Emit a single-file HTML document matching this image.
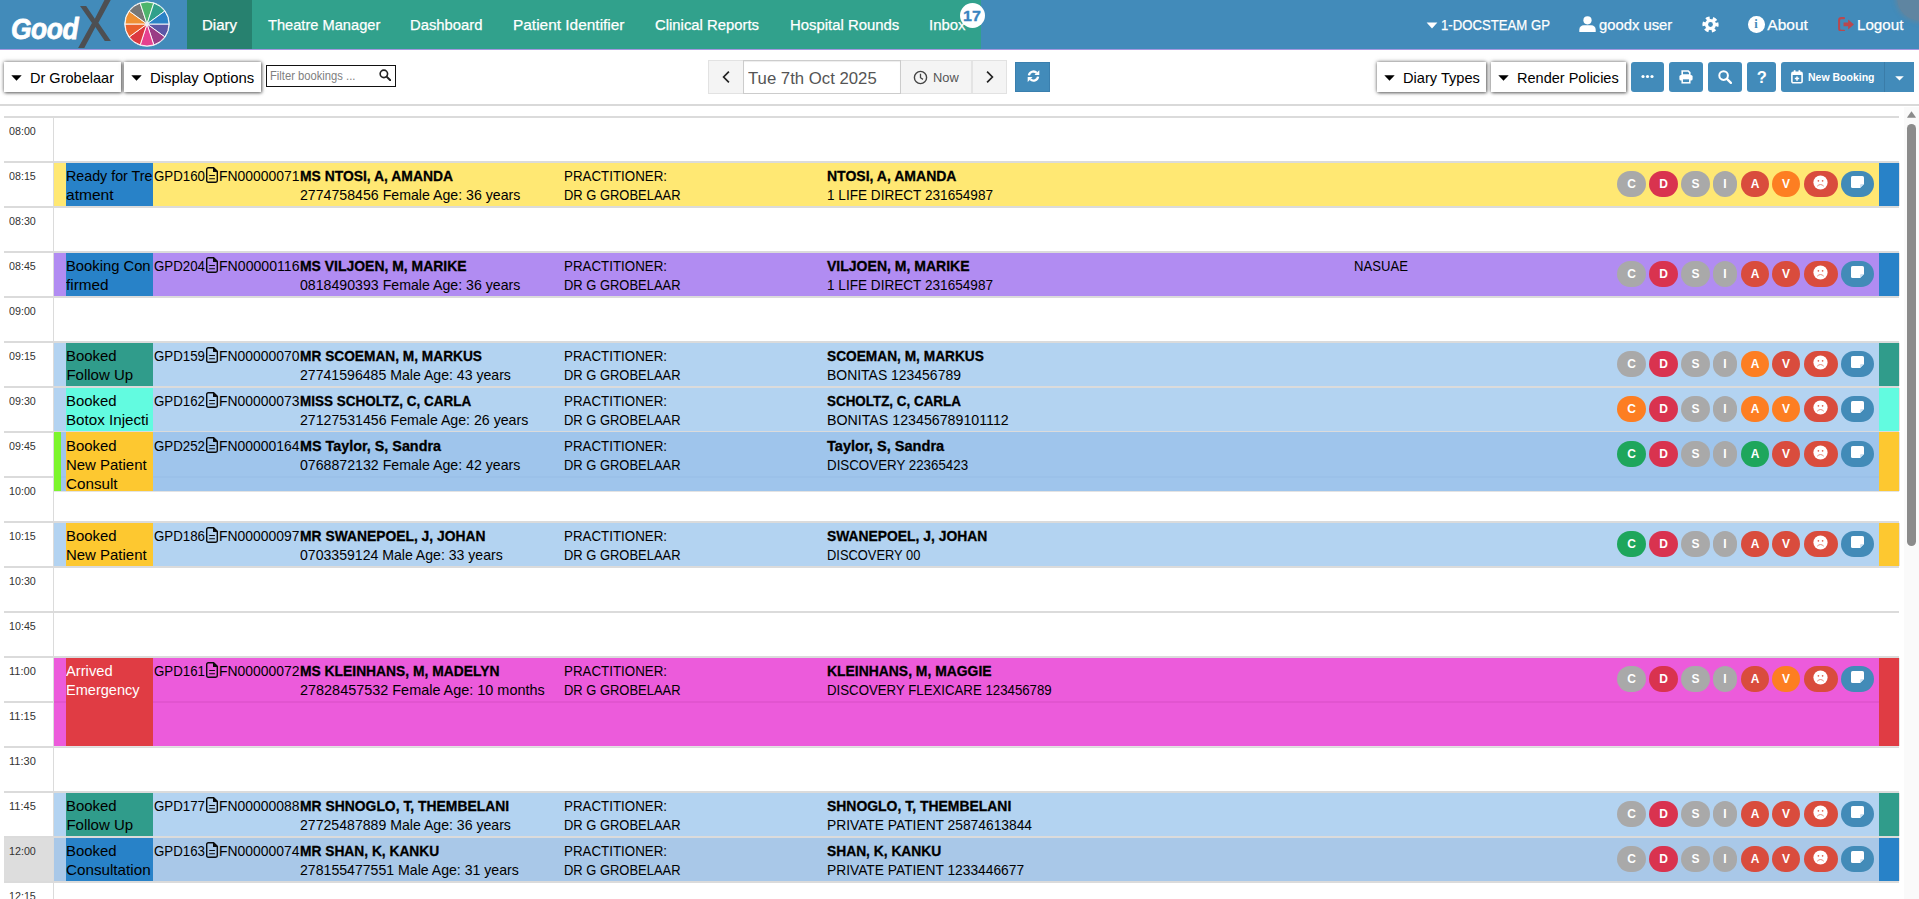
<!DOCTYPE html>
<html lang="en"><head><meta charset="utf-8"><title>GoodX Diary</title>
<style>html,body{margin:0;padding:0}body{width:1919px;height:899px;overflow:hidden;position:relative;background:#fff;font-family:'Liberation Sans',sans-serif;color:#000}
.t{position:absolute;white-space:nowrap;display:block}.b{position:absolute;display:block}</style></head>
<body>
<div class="b" style="left:0px;top:0px;width:1919px;height:49px;background:#428bba;"></div>
<div class="b" style="left:187px;top:0px;width:794px;height:49px;background:#31a18c;"></div>
<div class="b" style="left:187px;top:0px;width:65px;height:49px;background:#27816f;"></div>
<div class="b" style="left:0px;top:49px;width:1919px;height:1px;background:#a397df;"></div>
<div class="b" style="left:1897px;top:-25px;width:48px;height:46px;border-radius:50%;background:rgba(120,130,140,.55);box-shadow:0 0 4px 2px rgba(120,130,140,.45)"></div>
<span class="t" style="left:11px;top:9.5px;font-size:29px;line-height:38px;font-weight:700;font-style:italic;color:#fff;transform-origin:0 50%;transform:scaleX(.91);-webkit-text-stroke:.8px #fff;letter-spacing:-.5px">Good</span>
<span class="t" style="left:75px;top:-12px;font-size:70px;line-height:72px;color:#4d4f52;transform-origin:0 50%;transform:scaleX(.86) skewX(5deg)">X</span>
<div class="b" style="left:66px;top:0px;width:27px;height:6px;background:#428bba;"></div>
<div class="b" style="left:103px;top:41px;width:21px;height:8px;background:#428bba;"></div>
<svg class="b" style="left:124px;top:1px" width="46" height="46" viewBox="-23 -23 46 46"><circle r="22.6" fill="#fff"/><path d="M0 0L22.00 0.00A22 22 0 0 1 17.80 12.93Z" fill="#5b57a6" stroke="#fff" stroke-width=".9"/><path d="M0 0L17.80 12.93A22 22 0 0 1 6.80 20.92Z" fill="#9a3c86" stroke="#fff" stroke-width=".9"/><path d="M0 0L6.80 20.92A22 22 0 0 1 -6.80 20.92Z" fill="#e5408f" stroke="#fff" stroke-width=".9"/><path d="M0 0L-6.80 20.92A22 22 0 0 1 -17.80 12.93Z" fill="#dc3840" stroke="#fff" stroke-width=".9"/><path d="M0 0L-17.80 12.93A22 22 0 0 1 -22.00 0.00Z" fill="#ea612c" stroke="#fff" stroke-width=".9"/><path d="M0 0L-22.00 0.00A22 22 0 0 1 -17.80 -12.93Z" fill="#ef9033" stroke="#fff" stroke-width=".9"/><path d="M0 0L-17.80 -12.93A22 22 0 0 1 -6.80 -20.92Z" fill="#777777" stroke="#fff" stroke-width=".9"/><path d="M0 0L-6.80 -20.92A22 22 0 0 1 6.80 -20.92Z" fill="#4db56c" stroke="#fff" stroke-width=".9"/><path d="M0 0L6.80 -20.92A22 22 0 0 1 17.80 -12.93Z" fill="#30a08b" stroke="#fff" stroke-width=".9"/><path d="M0 0L17.80 -12.93A22 22 0 0 1 22.00 -0.00Z" fill="#2a82c6" stroke="#fff" stroke-width=".9"/><circle r="2" fill="#e8eef5"/></svg>
<span class="t" style="left:202.3px;top:15.43px;font-size:15.5px;line-height:20px;color:#fff;transform-origin:0 0;transform:scaleX(0.9676);-webkit-text-stroke:.25px #fff;">Diary</span>
<span class="t" style="left:267.7px;top:15.43px;font-size:15.5px;line-height:20px;color:#fff;transform-origin:0 0;transform:scaleX(0.9444);-webkit-text-stroke:.25px #fff;">Theatre Manager</span>
<span class="t" style="left:410.0px;top:15.43px;font-size:15.5px;line-height:20px;color:#fff;transform-origin:0 0;transform:scaleX(0.9561);-webkit-text-stroke:.25px #fff;">Dashboard</span>
<span class="t" style="left:513.3px;top:15.43px;font-size:15.5px;line-height:20px;color:#fff;transform-origin:0 0;transform:scaleX(0.9954);-webkit-text-stroke:.25px #fff;">Patient Identifier</span>
<span class="t" style="left:655.0px;top:15.43px;font-size:15.5px;line-height:20px;color:#fff;transform-origin:0 0;transform:scaleX(0.9581);-webkit-text-stroke:.25px #fff;">Clinical Reports</span>
<span class="t" style="left:789.7px;top:15.43px;font-size:15.5px;line-height:20px;color:#fff;transform-origin:0 0;transform:scaleX(0.9610);-webkit-text-stroke:.25px #fff;">Hospital Rounds</span>
<span class="t" style="left:929.4px;top:15.43px;font-size:15.5px;line-height:20px;color:#fff;transform-origin:0 0;transform:scaleX(0.9651);-webkit-text-stroke:.25px #fff;">Inbox</span>
<div class="b" style="left:960px;top:2.5px;width:25px;height:25px;border-radius:50%;background:#fff"></div>
<span class="t" style="left:963.0px;top:5.93px;font-size:15.2px;line-height:20px;font-weight:700;color:#3a84c0;transform-origin:0 0;transform:scaleX(1.0529);-webkit-text-stroke:.3px #3a84c0;">17</span>
<svg class="b" style="left:1426px;top:22px" width="12" height="7" viewBox="0 0 12 7"><path d="M.6 .6h10.8L6 6.4z" fill="#fff"/></svg>
<span class="t" style="left:1440.6px;top:15.43px;font-size:15.5px;line-height:20px;color:#fff;transform-origin:0 0;transform:scaleX(0.8494);-webkit-text-stroke:.25px #fff;">1-DOCSTEAM GP</span>
<svg class="b" style="left:1579px;top:16px" width="17" height="16" viewBox="0 0 17 16"><circle cx="8.5" cy="4.3" r="4.1" fill="#fff"/><path d="M0.3 16v-2.3c0-2.6 2-4.4 4.6-4.4h7.2c2.6 0 4.6 1.8 4.6 4.4V16z" fill="#fff"/></svg>
<span class="t" style="left:1599.3px;top:15.43px;font-size:15.5px;line-height:20px;color:#fff;transform-origin:0 0;transform:scaleX(0.9556);-webkit-text-stroke:.25px #fff;">goodx user</span>
<svg class="b" style="left:1702px;top:16px" width="17" height="17" viewBox="-8.5 -8.5 17 17"><circle r="5.5" fill="#fff"/><circle r="6.3" fill="none" stroke="#fff" stroke-width="3.6" stroke-dasharray="3.7 2.897" transform="rotate(-16.8)"/><circle r="2.4" fill="#428bba"/></svg>
<div class="b" style="left:1748px;top:16px;width:16.5px;height:16.5px;border-radius:50%;background:#fff"></div>
<span class="t" style="left:1754.2px;top:16.27px;font-size:12.5px;line-height:16px;font-weight:700;color:#428bba;font-family:'Liberation Serif',serif;">i</span>
<span class="t" style="left:1767.3px;top:15.43px;font-size:15.5px;line-height:20px;color:#fff;-webkit-text-stroke:.25px #fff;">About</span>
<svg class="b" style="left:1837.6px;top:16.6px" width="16.6" height="14.8" viewBox="0 0 18 16"><path d="M6.5 1.2H3.6C2.2 1.2 1.2 2.2 1.2 3.6v8.8c0 1.4 1 2.4 2.4 2.4h2.9" fill="none" stroke="#b9484f" stroke-width="2.2" stroke-linecap="round"/><path d="M6 6h5V2.6L17.3 8 11 13.4V10H6z" fill="#b9484f"/></svg>
<span class="t" style="left:1857.2px;top:15.43px;font-size:15.5px;line-height:20px;color:#fff;transform-origin:0 0;transform:scaleX(0.9785);-webkit-text-stroke:.25px #fff;">Logout</span>
<div class="b" style="left:4px;top:62px;width:116.5px;height:30px;background:#fff;box-shadow:0 0 4px rgba(0,0,0,.55),1px 1px 3px rgba(0,0,0,.4);"></div>
<svg class="b" style="left:11.2px;top:75px" width="11" height="6" viewBox="0 0 11 6"><path d="M.3 .3h10.4L5.5 5.8z" fill="#000"/></svg>
<span class="t" style="left:30.2px;top:68.40px;font-size:15px;line-height:20px;transform-origin:0 0;transform:scaleX(0.9688);">Dr Grobelaar</span>
<div class="b" style="left:124px;top:62px;width:137px;height:30px;background:#fff;box-shadow:0 0 4px rgba(0,0,0,.55),1px 1px 3px rgba(0,0,0,.4);"></div>
<svg class="b" style="left:131px;top:75px" width="11" height="6" viewBox="0 0 11 6"><path d="M.3 .3h10.4L5.5 5.8z" fill="#000"/></svg>
<span class="t" style="left:150.1px;top:68.40px;font-size:15px;line-height:20px;transform-origin:0 0;transform:scaleX(0.9919);">Display Options</span>
<div class="b" style="left:1377px;top:62px;width:109px;height:30px;background:#fff;box-shadow:0 0 4px rgba(0,0,0,.55),1px 1px 3px rgba(0,0,0,.4);"></div>
<svg class="b" style="left:1384px;top:75px" width="11" height="6" viewBox="0 0 11 6"><path d="M.3 .3h10.4L5.5 5.8z" fill="#000"/></svg>
<span class="t" style="left:1402.5px;top:68.40px;font-size:15px;line-height:20px;transform-origin:0 0;transform:scaleX(0.9744);">Diary Types</span>
<div class="b" style="left:1491px;top:62px;width:135px;height:30px;background:#fff;box-shadow:0 0 4px rgba(0,0,0,.55),1px 1px 3px rgba(0,0,0,.4);"></div>
<svg class="b" style="left:1498.2px;top:75px" width="11" height="6" viewBox="0 0 11 6"><path d="M.3 .3h10.4L5.5 5.8z" fill="#000"/></svg>
<span class="t" style="left:1517.3px;top:68.40px;font-size:15px;line-height:20px;transform-origin:0 0;transform:scaleX(0.9680);">Render Policies</span>
<div class="b" style="left:266px;top:65px;width:130px;height:22px;background:#fff;box-sizing:border-box;border:1px solid #111;"></div>
<span class="t" style="left:269.6px;top:67.84px;font-size:12px;line-height:16px;color:#808080;transform-origin:0 0;transform:scaleX(0.9346);">Filter bookings ...</span>
<svg class="b" style="left:378.5px;top:69px" width="12.4" height="12.4" viewBox="0 0 13 13"><circle cx="5.1" cy="5.1" r="3.9" fill="none" stroke="#222" stroke-width="1.7"/><path d="M8 8l4 4" stroke="#222" stroke-width="2.1" stroke-linecap="round"/></svg>
<div class="b" style="left:708px;top:60px;width:299px;height:34px;background:#f4f4f4;box-sizing:border-box;border:1px solid #e2e2e2;"></div>
<div class="b" style="left:743px;top:60px;width:158px;height:34px;background:#fff;box-sizing:border-box;border:1px solid #ccc;box-shadow:inset 0 1px 1px rgba(0,0,0,.075);"></div>
<div class="b" style="left:971px;top:61px;width:2px;height:32px;background:#e4e4e4;"></div>
<svg class="b" style="left:721px;top:70px" width="10" height="14" viewBox="0 0 10 14"><path d="M7.9 1.6L2.6 7l5.3 5.4" fill="none" stroke="#222" stroke-width="1.7"/></svg>
<svg class="b" style="left:985px;top:70px" width="10" height="14" viewBox="0 0 10 14"><path d="M2.1 1.6L7.4 7l-5.3 5.4" fill="none" stroke="#222" stroke-width="1.7"/></svg>
<span class="t" style="left:748.0px;top:67.51px;font-size:17px;line-height:22px;color:#555;transform-origin:0 0;transform:scaleX(0.9844);">Tue 7th Oct 2025</span>
<svg class="b" style="left:913px;top:70px" width="15" height="15" viewBox="0 0 15 15"><circle cx="7.5" cy="7.5" r="6.1" fill="none" stroke="#444" stroke-width="1.4"/><path d="M7.5 3.8v3.9l2.5 1.7" fill="none" stroke="#444" stroke-width="1.3"/></svg>
<span class="t" style="left:933.2px;top:69.20px;font-size:13px;line-height:17px;color:#555;transform-origin:0 0;transform:scaleX(0.9879);">Now</span>
<div class="b" style="left:1015px;top:62px;width:35px;height:30px;background:#428bba;box-sizing:border-box;border:1px solid #3a7fae;"></div>
<svg class="b" style="left:1026.6px;top:70.4px" width="13" height="12.1" viewBox="0 0 15 14"><path d="M2.2 6.3A5.3 5.3 0 0 1 11.2 3.3" fill="none" stroke="#fff" stroke-width="2.7"/><path d="M14.2 .2v5.6H8.6z" fill="#fff"/><path d="M12.8 7.7A5.3 5.3 0 0 1 3.8 10.7" fill="none" stroke="#fff" stroke-width="2.7"/><path d="M.8 13.8V8.2H6.4z" fill="#fff"/></svg>
<div class="b" style="left:1631px;top:62px;width:33px;height:30px;background:#428bba;border-radius:3px;"></div>
<div class="b" style="left:1669px;top:62px;width:34px;height:30px;background:#428bba;border-radius:3px;"></div>
<div class="b" style="left:1708px;top:62px;width:34px;height:30px;background:#428bba;border-radius:3px;"></div>
<div class="b" style="left:1747px;top:62px;width:29px;height:30px;background:#428bba;border-radius:3px;"></div>
<div class="b" style="left:1781px;top:62px;width:133px;height:30px;background:#428bba;border-radius:3px 0 0 3px;"></div>
<div class="b" style="left:1884px;top:62px;width:1px;height:30px;background:#3a7ca8;"></div>
<svg class="b" style="left:1641px;top:74px" width="13" height="5" viewBox="0 0 13 5"><circle cx="2" cy="2.5" r="1.6" fill="#fff"/><circle cx="6.5" cy="2.5" r="1.6" fill="#fff"/><circle cx="11" cy="2.5" r="1.6" fill="#fff"/></svg>
<svg class="b" style="left:1678.5px;top:70px" width="14" height="14" viewBox="0 0 14 14"><path d="M3.2 1h6l1.6 1.6V5H3.2z" fill="none" stroke="#fff" stroke-width="1.6"/><rect x=".4" y="5" width="13.2" height="5.6" rx="1.6" fill="#fff"/><rect x="3.2" y="8.6" width="7.6" height="4.2" fill="#428bba" stroke="#fff" stroke-width="1.5"/></svg>
<svg class="b" style="left:1717.5px;top:70px" width="14" height="14" viewBox="0 0 14 14"><circle cx="5.6" cy="5.6" r="4.3" fill="none" stroke="#fff" stroke-width="2"/><path d="M8.9 8.9l4 4" stroke="#fff" stroke-width="2.3" stroke-linecap="round"/></svg>
<span class="t" style="left:1756.8px;top:66.78px;font-size:16.5px;line-height:21px;font-weight:700;color:#fff;">?</span>
<svg class="b" style="left:1791px;top:70px" width="12" height="14" viewBox="0 0 12 14"><rect x=".9" y="2.4" width="10.2" height="10.4" rx="1.3" fill="none" stroke="#fff" stroke-width="1.6"/><rect x=".9" y="2.4" width="10.2" height="2.6" fill="#fff"/><rect x="2.8" y=".2" width="1.7" height="3" fill="#fff"/><rect x="7.5" y=".2" width="1.7" height="3" fill="#fff"/><path d="M6 6.4v4.4M3.8 8.6h4.4" stroke="#fff" stroke-width="1.5"/></svg>
<span class="t" style="left:1807.8px;top:69.98px;font-size:11.3px;line-height:15px;font-weight:700;color:#fff;transform-origin:0 0;transform:scaleX(0.9293);">New Booking</span>
<svg class="b" style="left:1894.5px;top:76px" width="9" height="5" viewBox="0 0 9 5"><path d="M.2 .3h8.6L4.5 4.6z" fill="#fff"/></svg>
<div class="b" style="left:0px;top:104px;width:1919px;height:2px;background:#d9d9d9;"></div>
<div class="b" style="left:4px;top:116px;width:1895px;height:2px;background:#dbdbdb;"></div>
<div class="b" style="left:4px;top:161px;width:1895px;height:2px;background:#dbdbdb;"></div>
<div class="b" style="left:4px;top:206px;width:1895px;height:2px;background:#dbdbdb;"></div>
<div class="b" style="left:4px;top:251px;width:1895px;height:2px;background:#dbdbdb;"></div>
<div class="b" style="left:4px;top:296px;width:1895px;height:2px;background:#dbdbdb;"></div>
<div class="b" style="left:4px;top:341px;width:1895px;height:2px;background:#dbdbdb;"></div>
<div class="b" style="left:4px;top:386px;width:1895px;height:2px;background:#dbdbdb;"></div>
<div class="b" style="left:4px;top:431px;width:1895px;height:2px;background:#dbdbdb;"></div>
<div class="b" style="left:4px;top:476px;width:1895px;height:2px;background:#dbdbdb;"></div>
<div class="b" style="left:4px;top:521px;width:1895px;height:2px;background:#dbdbdb;"></div>
<div class="b" style="left:4px;top:566px;width:1895px;height:2px;background:#dbdbdb;"></div>
<div class="b" style="left:4px;top:611px;width:1895px;height:2px;background:#dbdbdb;"></div>
<div class="b" style="left:4px;top:656px;width:1895px;height:2px;background:#dbdbdb;"></div>
<div class="b" style="left:4px;top:701px;width:1895px;height:2px;background:#dbdbdb;"></div>
<div class="b" style="left:4px;top:746px;width:1895px;height:2px;background:#dbdbdb;"></div>
<div class="b" style="left:4px;top:791px;width:1895px;height:2px;background:#dbdbdb;"></div>
<div class="b" style="left:4px;top:838px;width:49px;height:43px;background:#dddddd;"></div>
<div class="b" style="left:4px;top:836px;width:1895px;height:2px;background:#dbdbdb;"></div>
<div class="b" style="left:4px;top:881px;width:1895px;height:2px;background:#dbdbdb;"></div>
<div class="b" style="left:53px;top:118px;width:1px;height:790px;background:#dbdbdb;"></div>
<span class="t" style="left:9.0px;top:123.89px;font-size:11px;line-height:14px;color:#333;transform-origin:0 0;transform:scaleX(0.9734);">08:00</span>
<span class="t" style="left:9.0px;top:168.89px;font-size:11px;line-height:14px;color:#333;transform-origin:0 0;transform:scaleX(0.9734);">08:15</span>
<div class="b" style="left:54px;top:163px;width:1845px;height:43px;background:#ffe873;"></div>
<div class="b" style="left:1899px;top:163px;width:1px;height:43px;background:#e6e2e2;"></div>
<div class="b" style="left:66px;top:163px;width:87px;height:43px;background:#2882c8;"></div>
<div class="b" style="left:1879px;top:163px;width:20px;height:43px;background:#2882c8;"></div>
<span class="t" style="left:66.4px;top:165.60px;font-size:15px;line-height:20px;transform-origin:0 0;transform:scaleX(0.9508);">Ready for Tre</span>
<span class="t" style="left:66.4px;top:184.60px;font-size:15px;line-height:20px;transform-origin:0 0;transform:scaleX(1.0380);">atment</span>
<span class="t" style="left:154.2px;top:165.60px;font-size:15px;line-height:20px;transform-origin:0 0;transform:scaleX(0.8862);">GPD160</span>
<svg class="b" style="left:206px;top:166.9px" width="12" height="16" viewBox="0 0 12 16"><path d="M2.3 .7H7.6L11.3 4.4V13.6A1.6 1.6 0 0 1 9.7 15.2H2.3A1.6 1.6 0 0 1 .7 13.6V2.3A1.6 1.6 0 0 1 2.3 .7Z" fill="none" stroke="#0b0b0b" stroke-width="1.4"/><path d="M7 .7V4.9H11.3V4.4L7.6 .7Z" fill="#0b0b0b"/><path d="M3.2 8.5h5.7M3.2 11.7h5.7" stroke="#0b0b0b" stroke-width="1.1"/></svg>
<span class="t" style="left:218.8px;top:165.60px;font-size:15px;line-height:20px;transform-origin:0 0;transform:scaleX(0.9281);">FN00000071</span>
<span class="t" style="left:300.4px;top:165.60px;font-size:15px;line-height:20px;font-weight:700;transform-origin:0 0;transform:scaleX(0.9257);-webkit-text-stroke:.3px #000;">MS NTOSI, A, AMANDA</span>
<span class="t" style="left:300.4px;top:184.70px;font-size:15px;line-height:20px;transform-origin:0 0;transform:scaleX(0.9438);">2774758456 Female Age: 36 years</span>
<span class="t" style="left:563.9px;top:165.60px;font-size:15px;line-height:20px;transform-origin:0 0;transform:scaleX(0.8891);">PRACTITIONER:</span>
<span class="t" style="left:563.9px;top:184.70px;font-size:15px;line-height:20px;transform-origin:0 0;transform:scaleX(0.8628);">DR G GROBELAAR</span>
<span class="t" style="left:826.9px;top:165.60px;font-size:15px;line-height:20px;font-weight:700;transform-origin:0 0;transform:scaleX(0.9342);-webkit-text-stroke:.3px #000;">NTOSI, A, AMANDA</span>
<span class="t" style="left:826.9px;top:184.70px;font-size:15px;line-height:20px;transform-origin:0 0;transform:scaleX(0.9063);">1 LIFE DIRECT 231654987</span>
<div class="b" style="left:1617px;top:171px;width:29px;height:26px;border-radius:13px;background:#a9a9a9"></div>
<span class="t" style="top:176.24px;font-size:12px;line-height:16px;font-weight:700;color:#fff;left:1617px;width:29px;text-align:center;">C</span>
<div class="b" style="left:1649px;top:171px;width:29px;height:26px;border-radius:13px;background:#d9334f"></div>
<span class="t" style="top:176.24px;font-size:12px;line-height:16px;font-weight:700;color:#fff;left:1649px;width:29px;text-align:center;">D</span>
<div class="b" style="left:1681px;top:171px;width:29px;height:26px;border-radius:13px;background:#a9a9a9"></div>
<span class="t" style="top:176.24px;font-size:12px;line-height:16px;font-weight:700;color:#fff;left:1681px;width:29px;text-align:center;">S</span>
<div class="b" style="left:1713px;top:171px;width:24px;height:26px;border-radius:13px;background:#a9a9a9"></div>
<span class="t" style="top:176.24px;font-size:12px;line-height:16px;font-weight:700;color:#fff;left:1713px;width:24px;text-align:center;">I</span>
<div class="b" style="left:1741px;top:171px;width:28px;height:26px;border-radius:13px;background:#d94c3d"></div>
<span class="t" style="top:176.24px;font-size:12px;line-height:16px;font-weight:700;color:#fff;left:1741px;width:28px;text-align:center;">A</span>
<div class="b" style="left:1772px;top:171px;width:28px;height:26px;border-radius:13px;background:#fd7e22"></div>
<span class="t" style="top:176.24px;font-size:12px;line-height:16px;font-weight:700;color:#fff;left:1772px;width:28px;text-align:center;">V</span>
<div class="b" style="left:1804px;top:171px;width:34px;height:26px;border-radius:13px;background:#d94c3d"></div>
<svg class="b" style="left:1813px;top:175px" width="15" height="15" viewBox="-7.5 -7.5 15 15"><circle r="7.1" fill="#fff"/><circle cx="-2.1" cy="-1.7" r=".85" fill="#e0624f"/><circle cx="2.1" cy="-1.7" r=".85" fill="#e0624f"/><path d="M-3 3.4Q0 .4 3 3.4" fill="none" stroke="#e47a68" stroke-width=".9" stroke-linecap="round"/></svg>
<div class="b" style="left:1841px;top:171px;width:33px;height:26px;border-radius:13px;background:#428bb8"></div>
<svg class="b" style="left:1851px;top:176.2px" width="14" height="13" viewBox="0 0 14 13"><path d="M1.6 0H11.4Q13 0 13 1.6V8L9 12H1.6Q0 12 0 10.4V1.6Q0 0 1.6 0Z" fill="#fff"/><path d="M9 12V9.4Q9 8 10.4 8H13Z" fill="#cfe3f3"/></svg>
<span class="t" style="left:9.0px;top:213.89px;font-size:11px;line-height:14px;color:#333;transform-origin:0 0;transform:scaleX(0.9734);">08:30</span>
<span class="t" style="left:9.0px;top:258.89px;font-size:11px;line-height:14px;color:#333;transform-origin:0 0;transform:scaleX(0.9734);">08:45</span>
<div class="b" style="left:54px;top:253px;width:1845px;height:43px;background:#b18cf2;"></div>
<div class="b" style="left:1899px;top:253px;width:1px;height:43px;background:#e6e2e2;"></div>
<div class="b" style="left:66px;top:253px;width:87px;height:43px;background:#2882c8;"></div>
<div class="b" style="left:1879px;top:253px;width:20px;height:43px;background:#2882c8;"></div>
<span class="t" style="left:66.4px;top:255.60px;font-size:15px;line-height:20px;transform-origin:0 0;transform:scaleX(0.9848);">Booking Con</span>
<span class="t" style="left:66.4px;top:274.60px;font-size:15px;line-height:20px;transform-origin:0 0;transform:scaleX(1.0219);">firmed</span>
<span class="t" style="left:154.2px;top:255.60px;font-size:15px;line-height:20px;transform-origin:0 0;transform:scaleX(0.8862);">GPD204</span>
<svg class="b" style="left:206px;top:256.9px" width="12" height="16" viewBox="0 0 12 16"><path d="M2.3 .7H7.6L11.3 4.4V13.6A1.6 1.6 0 0 1 9.7 15.2H2.3A1.6 1.6 0 0 1 .7 13.6V2.3A1.6 1.6 0 0 1 2.3 .7Z" fill="none" stroke="#0b0b0b" stroke-width="1.4"/><path d="M7 .7V4.9H11.3V4.4L7.6 .7Z" fill="#0b0b0b"/><path d="M3.2 8.5h5.7M3.2 11.7h5.7" stroke="#0b0b0b" stroke-width="1.1"/></svg>
<span class="t" style="left:218.8px;top:255.60px;font-size:15px;line-height:20px;transform-origin:0 0;transform:scaleX(0.9401);">FN00000116</span>
<span class="t" style="left:300.4px;top:255.60px;font-size:15px;line-height:20px;font-weight:700;transform-origin:0 0;transform:scaleX(0.9298);-webkit-text-stroke:.3px #000;">MS VILJOEN, M, MARIKE</span>
<span class="t" style="left:300.4px;top:274.70px;font-size:15px;line-height:20px;transform-origin:0 0;transform:scaleX(0.9438);">0818490393 Female Age: 36 years</span>
<span class="t" style="left:563.9px;top:255.60px;font-size:15px;line-height:20px;transform-origin:0 0;transform:scaleX(0.8891);">PRACTITIONER:</span>
<span class="t" style="left:563.9px;top:274.70px;font-size:15px;line-height:20px;transform-origin:0 0;transform:scaleX(0.8628);">DR G GROBELAAR</span>
<span class="t" style="left:826.9px;top:255.60px;font-size:15px;line-height:20px;font-weight:700;transform-origin:0 0;transform:scaleX(0.9350);-webkit-text-stroke:.3px #000;">VILJOEN, M, MARIKE</span>
<span class="t" style="left:826.9px;top:274.70px;font-size:15px;line-height:20px;transform-origin:0 0;transform:scaleX(0.9063);">1 LIFE DIRECT 231654987</span>
<span class="t" style="left:1354.0px;top:255.60px;font-size:15px;line-height:20px;transform-origin:0 0;transform:scaleX(0.8754);">NASUAE</span>
<div class="b" style="left:1617px;top:261px;width:29px;height:26px;border-radius:13px;background:#a9a9a9"></div>
<span class="t" style="top:266.24px;font-size:12px;line-height:16px;font-weight:700;color:#fff;left:1617px;width:29px;text-align:center;">C</span>
<div class="b" style="left:1649px;top:261px;width:29px;height:26px;border-radius:13px;background:#d9334f"></div>
<span class="t" style="top:266.24px;font-size:12px;line-height:16px;font-weight:700;color:#fff;left:1649px;width:29px;text-align:center;">D</span>
<div class="b" style="left:1681px;top:261px;width:29px;height:26px;border-radius:13px;background:#a9a9a9"></div>
<span class="t" style="top:266.24px;font-size:12px;line-height:16px;font-weight:700;color:#fff;left:1681px;width:29px;text-align:center;">S</span>
<div class="b" style="left:1713px;top:261px;width:24px;height:26px;border-radius:13px;background:#a9a9a9"></div>
<span class="t" style="top:266.24px;font-size:12px;line-height:16px;font-weight:700;color:#fff;left:1713px;width:24px;text-align:center;">I</span>
<div class="b" style="left:1741px;top:261px;width:28px;height:26px;border-radius:13px;background:#d94c3d"></div>
<span class="t" style="top:266.24px;font-size:12px;line-height:16px;font-weight:700;color:#fff;left:1741px;width:28px;text-align:center;">A</span>
<div class="b" style="left:1772px;top:261px;width:28px;height:26px;border-radius:13px;background:#d94c3d"></div>
<span class="t" style="top:266.24px;font-size:12px;line-height:16px;font-weight:700;color:#fff;left:1772px;width:28px;text-align:center;">V</span>
<div class="b" style="left:1804px;top:261px;width:34px;height:26px;border-radius:13px;background:#d94c3d"></div>
<svg class="b" style="left:1813px;top:265px" width="15" height="15" viewBox="-7.5 -7.5 15 15"><circle r="7.1" fill="#fff"/><circle cx="-2.1" cy="-1.7" r=".85" fill="#e0624f"/><circle cx="2.1" cy="-1.7" r=".85" fill="#e0624f"/><path d="M-3 3.4Q0 .4 3 3.4" fill="none" stroke="#e47a68" stroke-width=".9" stroke-linecap="round"/></svg>
<div class="b" style="left:1841px;top:261px;width:33px;height:26px;border-radius:13px;background:#428bb8"></div>
<svg class="b" style="left:1851px;top:266.2px" width="14" height="13" viewBox="0 0 14 13"><path d="M1.6 0H11.4Q13 0 13 1.6V8L9 12H1.6Q0 12 0 10.4V1.6Q0 0 1.6 0Z" fill="#fff"/><path d="M9 12V9.4Q9 8 10.4 8H13Z" fill="#cfe3f3"/></svg>
<span class="t" style="left:9.0px;top:303.89px;font-size:11px;line-height:14px;color:#333;transform-origin:0 0;transform:scaleX(0.9734);">09:00</span>
<span class="t" style="left:9.0px;top:348.89px;font-size:11px;line-height:14px;color:#333;transform-origin:0 0;transform:scaleX(0.9734);">09:15</span>
<div class="b" style="left:54px;top:343px;width:1845px;height:43px;background:#b3d3f1;"></div>
<div class="b" style="left:1899px;top:343px;width:1px;height:43px;background:#e6e2e2;"></div>
<div class="b" style="left:66px;top:343px;width:87px;height:43px;background:#309c8b;"></div>
<div class="b" style="left:1879px;top:343px;width:20px;height:43px;background:#309c8b;"></div>
<span class="t" style="left:66.4px;top:345.60px;font-size:15px;line-height:20px;transform-origin:0 0;transform:scaleX(0.9946);">Booked</span>
<span class="t" style="left:66.4px;top:364.60px;font-size:15px;line-height:20px;">Follow Up</span>
<span class="t" style="left:154.2px;top:345.60px;font-size:15px;line-height:20px;transform-origin:0 0;transform:scaleX(0.8862);">GPD159</span>
<svg class="b" style="left:206px;top:346.9px" width="12" height="16" viewBox="0 0 12 16"><path d="M2.3 .7H7.6L11.3 4.4V13.6A1.6 1.6 0 0 1 9.7 15.2H2.3A1.6 1.6 0 0 1 .7 13.6V2.3A1.6 1.6 0 0 1 2.3 .7Z" fill="none" stroke="#0b0b0b" stroke-width="1.4"/><path d="M7 .7V4.9H11.3V4.4L7.6 .7Z" fill="#0b0b0b"/><path d="M3.2 8.5h5.7M3.2 11.7h5.7" stroke="#0b0b0b" stroke-width="1.1"/></svg>
<span class="t" style="left:218.8px;top:345.60px;font-size:15px;line-height:20px;transform-origin:0 0;transform:scaleX(0.9281);">FN00000070</span>
<span class="t" style="left:300.4px;top:345.60px;font-size:15px;line-height:20px;font-weight:700;transform-origin:0 0;transform:scaleX(0.9138);-webkit-text-stroke:.3px #000;">MR SCOEMAN, M, MARKUS</span>
<span class="t" style="left:300.4px;top:364.70px;font-size:15px;line-height:20px;transform-origin:0 0;transform:scaleX(0.9401);">27741596485 Male Age: 43 years</span>
<span class="t" style="left:563.9px;top:345.60px;font-size:15px;line-height:20px;transform-origin:0 0;transform:scaleX(0.8891);">PRACTITIONER:</span>
<span class="t" style="left:563.9px;top:364.70px;font-size:15px;line-height:20px;transform-origin:0 0;transform:scaleX(0.8628);">DR G GROBELAAR</span>
<span class="t" style="left:826.9px;top:345.60px;font-size:15px;line-height:20px;font-weight:700;transform-origin:0 0;transform:scaleX(0.9140);-webkit-text-stroke:.3px #000;">SCOEMAN, M, MARKUS</span>
<span class="t" style="left:826.9px;top:364.70px;font-size:15px;line-height:20px;transform-origin:0 0;transform:scaleX(0.9300);">BONITAS 123456789</span>
<div class="b" style="left:1617px;top:351px;width:29px;height:26px;border-radius:13px;background:#a9a9a9"></div>
<span class="t" style="top:356.24px;font-size:12px;line-height:16px;font-weight:700;color:#fff;left:1617px;width:29px;text-align:center;">C</span>
<div class="b" style="left:1649px;top:351px;width:29px;height:26px;border-radius:13px;background:#d9334f"></div>
<span class="t" style="top:356.24px;font-size:12px;line-height:16px;font-weight:700;color:#fff;left:1649px;width:29px;text-align:center;">D</span>
<div class="b" style="left:1681px;top:351px;width:29px;height:26px;border-radius:13px;background:#a9a9a9"></div>
<span class="t" style="top:356.24px;font-size:12px;line-height:16px;font-weight:700;color:#fff;left:1681px;width:29px;text-align:center;">S</span>
<div class="b" style="left:1713px;top:351px;width:24px;height:26px;border-radius:13px;background:#a9a9a9"></div>
<span class="t" style="top:356.24px;font-size:12px;line-height:16px;font-weight:700;color:#fff;left:1713px;width:24px;text-align:center;">I</span>
<div class="b" style="left:1741px;top:351px;width:28px;height:26px;border-radius:13px;background:#fd7e22"></div>
<span class="t" style="top:356.24px;font-size:12px;line-height:16px;font-weight:700;color:#fff;left:1741px;width:28px;text-align:center;">A</span>
<div class="b" style="left:1772px;top:351px;width:28px;height:26px;border-radius:13px;background:#d94c3d"></div>
<span class="t" style="top:356.24px;font-size:12px;line-height:16px;font-weight:700;color:#fff;left:1772px;width:28px;text-align:center;">V</span>
<div class="b" style="left:1804px;top:351px;width:34px;height:26px;border-radius:13px;background:#d94c3d"></div>
<svg class="b" style="left:1813px;top:355px" width="15" height="15" viewBox="-7.5 -7.5 15 15"><circle r="7.1" fill="#fff"/><circle cx="-2.1" cy="-1.7" r=".85" fill="#e0624f"/><circle cx="2.1" cy="-1.7" r=".85" fill="#e0624f"/><path d="M-3 3.4Q0 .4 3 3.4" fill="none" stroke="#e47a68" stroke-width=".9" stroke-linecap="round"/></svg>
<div class="b" style="left:1841px;top:351px;width:33px;height:26px;border-radius:13px;background:#428bb8"></div>
<svg class="b" style="left:1851px;top:356.2px" width="14" height="13" viewBox="0 0 14 13"><path d="M1.6 0H11.4Q13 0 13 1.6V8L9 12H1.6Q0 12 0 10.4V1.6Q0 0 1.6 0Z" fill="#fff"/><path d="M9 12V9.4Q9 8 10.4 8H13Z" fill="#cfe3f3"/></svg>
<span class="t" style="left:9.0px;top:393.89px;font-size:11px;line-height:14px;color:#333;transform-origin:0 0;transform:scaleX(0.9734);">09:30</span>
<div class="b" style="left:54px;top:388px;width:1845px;height:43px;background:#b3d3f1;"></div>
<div class="b" style="left:1899px;top:388px;width:1px;height:43px;background:#e6e2e2;"></div>
<div class="b" style="left:66px;top:388px;width:87px;height:43px;background:#62fbe0;"></div>
<div class="b" style="left:1879px;top:388px;width:20px;height:43px;background:#62fbe0;"></div>
<span class="t" style="left:66.4px;top:390.60px;font-size:15px;line-height:20px;transform-origin:0 0;transform:scaleX(0.9946);">Booked</span>
<span class="t" style="left:66.4px;top:409.60px;font-size:15px;line-height:20px;transform-origin:0 0;transform:scaleX(1.0108);">Botox Injecti</span>
<span class="t" style="left:154.2px;top:390.60px;font-size:15px;line-height:20px;transform-origin:0 0;transform:scaleX(0.8862);">GPD162</span>
<svg class="b" style="left:206px;top:391.9px" width="12" height="16" viewBox="0 0 12 16"><path d="M2.3 .7H7.6L11.3 4.4V13.6A1.6 1.6 0 0 1 9.7 15.2H2.3A1.6 1.6 0 0 1 .7 13.6V2.3A1.6 1.6 0 0 1 2.3 .7Z" fill="none" stroke="#0b0b0b" stroke-width="1.4"/><path d="M7 .7V4.9H11.3V4.4L7.6 .7Z" fill="#0b0b0b"/><path d="M3.2 8.5h5.7M3.2 11.7h5.7" stroke="#0b0b0b" stroke-width="1.1"/></svg>
<span class="t" style="left:218.8px;top:390.60px;font-size:15px;line-height:20px;transform-origin:0 0;transform:scaleX(0.9281);">FN00000073</span>
<span class="t" style="left:300.4px;top:390.60px;font-size:15px;line-height:20px;font-weight:700;transform-origin:0 0;transform:scaleX(0.8985);-webkit-text-stroke:.3px #000;">MISS SCHOLTZ, C, CARLA</span>
<span class="t" style="left:300.4px;top:409.70px;font-size:15px;line-height:20px;transform-origin:0 0;transform:scaleX(0.9439);">27127531456 Female Age: 26 years</span>
<span class="t" style="left:563.9px;top:390.60px;font-size:15px;line-height:20px;transform-origin:0 0;transform:scaleX(0.8891);">PRACTITIONER:</span>
<span class="t" style="left:563.9px;top:409.70px;font-size:15px;line-height:20px;transform-origin:0 0;transform:scaleX(0.8628);">DR G GROBELAAR</span>
<span class="t" style="left:826.9px;top:390.60px;font-size:15px;line-height:20px;font-weight:700;transform-origin:0 0;transform:scaleX(0.8943);-webkit-text-stroke:.3px #000;">SCHOLTZ, C, CARLA</span>
<span class="t" style="left:826.9px;top:409.70px;font-size:15px;line-height:20px;transform-origin:0 0;transform:scaleX(0.9473);">BONITAS 123456789101112</span>
<div class="b" style="left:1617px;top:396px;width:29px;height:26px;border-radius:13px;background:#fd7e22"></div>
<span class="t" style="top:401.24px;font-size:12px;line-height:16px;font-weight:700;color:#fff;left:1617px;width:29px;text-align:center;">C</span>
<div class="b" style="left:1649px;top:396px;width:29px;height:26px;border-radius:13px;background:#d9334f"></div>
<span class="t" style="top:401.24px;font-size:12px;line-height:16px;font-weight:700;color:#fff;left:1649px;width:29px;text-align:center;">D</span>
<div class="b" style="left:1681px;top:396px;width:29px;height:26px;border-radius:13px;background:#a9a9a9"></div>
<span class="t" style="top:401.24px;font-size:12px;line-height:16px;font-weight:700;color:#fff;left:1681px;width:29px;text-align:center;">S</span>
<div class="b" style="left:1713px;top:396px;width:24px;height:26px;border-radius:13px;background:#a9a9a9"></div>
<span class="t" style="top:401.24px;font-size:12px;line-height:16px;font-weight:700;color:#fff;left:1713px;width:24px;text-align:center;">I</span>
<div class="b" style="left:1741px;top:396px;width:28px;height:26px;border-radius:13px;background:#fd7e22"></div>
<span class="t" style="top:401.24px;font-size:12px;line-height:16px;font-weight:700;color:#fff;left:1741px;width:28px;text-align:center;">A</span>
<div class="b" style="left:1772px;top:396px;width:28px;height:26px;border-radius:13px;background:#fd7e22"></div>
<span class="t" style="top:401.24px;font-size:12px;line-height:16px;font-weight:700;color:#fff;left:1772px;width:28px;text-align:center;">V</span>
<div class="b" style="left:1804px;top:396px;width:34px;height:26px;border-radius:13px;background:#d94c3d"></div>
<svg class="b" style="left:1813px;top:400px" width="15" height="15" viewBox="-7.5 -7.5 15 15"><circle r="7.1" fill="#fff"/><circle cx="-2.1" cy="-1.7" r=".85" fill="#e0624f"/><circle cx="2.1" cy="-1.7" r=".85" fill="#e0624f"/><path d="M-3 3.4Q0 .4 3 3.4" fill="none" stroke="#e47a68" stroke-width=".9" stroke-linecap="round"/></svg>
<div class="b" style="left:1841px;top:396px;width:33px;height:26px;border-radius:13px;background:#428bb8"></div>
<svg class="b" style="left:1851px;top:401.2px" width="14" height="13" viewBox="0 0 14 13"><path d="M1.6 0H11.4Q13 0 13 1.6V8L9 12H1.6Q0 12 0 10.4V1.6Q0 0 1.6 0Z" fill="#fff"/><path d="M9 12V9.4Q9 8 10.4 8H13Z" fill="#cfe3f3"/></svg>
<span class="t" style="left:9.0px;top:438.89px;font-size:11px;line-height:14px;color:#333;transform-origin:0 0;transform:scaleX(0.9734);">09:45</span>
<div class="b" style="left:54px;top:432px;width:1845px;height:59px;background:#9fc5ec;"></div>
<div class="b" style="left:1899px;top:432px;width:1px;height:59px;background:#e6e2e2;"></div>
<div class="b" style="left:54px;top:476px;width:1825px;height:2px;background:#9bc1e9;"></div>
<div class="b" style="left:54px;top:432px;width:7px;height:59px;background:#7cf52c;"></div>
<div class="b" style="left:66px;top:432px;width:87px;height:59px;background:#fdc830;"></div>
<div class="b" style="left:1879px;top:432px;width:20px;height:59px;background:#fdc830;"></div>
<div class="b" style="left:54px;top:491px;width:1845px;height:1px;background:#e3e3e3;"></div>
<span class="t" style="left:66.4px;top:435.60px;font-size:15px;line-height:20px;transform-origin:0 0;transform:scaleX(0.9946);">Booked</span>
<span class="t" style="left:66.4px;top:454.60px;font-size:15px;line-height:20px;transform-origin:0 0;transform:scaleX(0.9966);">New Patient</span>
<span class="t" style="left:66.4px;top:473.60px;font-size:15px;line-height:20px;transform-origin:0 0;transform:scaleX(1.0146);">Consult</span>
<span class="t" style="left:154.2px;top:435.60px;font-size:15px;line-height:20px;transform-origin:0 0;transform:scaleX(0.8862);">GPD252</span>
<svg class="b" style="left:206px;top:436.9px" width="12" height="16" viewBox="0 0 12 16"><path d="M2.3 .7H7.6L11.3 4.4V13.6A1.6 1.6 0 0 1 9.7 15.2H2.3A1.6 1.6 0 0 1 .7 13.6V2.3A1.6 1.6 0 0 1 2.3 .7Z" fill="none" stroke="#0b0b0b" stroke-width="1.4"/><path d="M7 .7V4.9H11.3V4.4L7.6 .7Z" fill="#0b0b0b"/><path d="M3.2 8.5h5.7M3.2 11.7h5.7" stroke="#0b0b0b" stroke-width="1.1"/></svg>
<span class="t" style="left:218.8px;top:435.60px;font-size:15px;line-height:20px;transform-origin:0 0;transform:scaleX(0.9281);">FN00000164</span>
<span class="t" style="left:300.4px;top:435.60px;font-size:15px;line-height:20px;font-weight:700;transform-origin:0 0;transform:scaleX(0.9574);-webkit-text-stroke:.3px #000;">MS Taylor, S, Sandra</span>
<span class="t" style="left:300.4px;top:454.70px;font-size:15px;line-height:20px;transform-origin:0 0;transform:scaleX(0.9434);">0768872132 Female Age: 42 years</span>
<span class="t" style="left:563.9px;top:435.60px;font-size:15px;line-height:20px;transform-origin:0 0;transform:scaleX(0.8891);">PRACTITIONER:</span>
<span class="t" style="left:563.9px;top:454.70px;font-size:15px;line-height:20px;transform-origin:0 0;transform:scaleX(0.8628);">DR G GROBELAAR</span>
<span class="t" style="left:826.9px;top:435.60px;font-size:15px;line-height:20px;font-weight:700;transform-origin:0 0;transform:scaleX(0.9717);-webkit-text-stroke:.3px #000;">Taylor, S, Sandra</span>
<span class="t" style="left:826.9px;top:454.70px;font-size:15px;line-height:20px;transform-origin:0 0;transform:scaleX(0.8890);">DISCOVERY 22365423</span>
<div class="b" style="left:1617px;top:441px;width:29px;height:26px;border-radius:13px;background:#1ea65c"></div>
<span class="t" style="top:446.24px;font-size:12px;line-height:16px;font-weight:700;color:#fff;left:1617px;width:29px;text-align:center;">C</span>
<div class="b" style="left:1649px;top:441px;width:29px;height:26px;border-radius:13px;background:#d9334f"></div>
<span class="t" style="top:446.24px;font-size:12px;line-height:16px;font-weight:700;color:#fff;left:1649px;width:29px;text-align:center;">D</span>
<div class="b" style="left:1681px;top:441px;width:29px;height:26px;border-radius:13px;background:#a9a9a9"></div>
<span class="t" style="top:446.24px;font-size:12px;line-height:16px;font-weight:700;color:#fff;left:1681px;width:29px;text-align:center;">S</span>
<div class="b" style="left:1713px;top:441px;width:24px;height:26px;border-radius:13px;background:#a9a9a9"></div>
<span class="t" style="top:446.24px;font-size:12px;line-height:16px;font-weight:700;color:#fff;left:1713px;width:24px;text-align:center;">I</span>
<div class="b" style="left:1741px;top:441px;width:28px;height:26px;border-radius:13px;background:#1ea65c"></div>
<span class="t" style="top:446.24px;font-size:12px;line-height:16px;font-weight:700;color:#fff;left:1741px;width:28px;text-align:center;">A</span>
<div class="b" style="left:1772px;top:441px;width:28px;height:26px;border-radius:13px;background:#d94c3d"></div>
<span class="t" style="top:446.24px;font-size:12px;line-height:16px;font-weight:700;color:#fff;left:1772px;width:28px;text-align:center;">V</span>
<div class="b" style="left:1804px;top:441px;width:34px;height:26px;border-radius:13px;background:#d94c3d"></div>
<svg class="b" style="left:1813px;top:445px" width="15" height="15" viewBox="-7.5 -7.5 15 15"><circle r="7.1" fill="#fff"/><circle cx="-2.1" cy="-1.7" r=".85" fill="#e0624f"/><circle cx="2.1" cy="-1.7" r=".85" fill="#e0624f"/><path d="M-3 3.4Q0 .4 3 3.4" fill="none" stroke="#e47a68" stroke-width=".9" stroke-linecap="round"/></svg>
<div class="b" style="left:1841px;top:441px;width:33px;height:26px;border-radius:13px;background:#428bb8"></div>
<svg class="b" style="left:1851px;top:446.2px" width="14" height="13" viewBox="0 0 14 13"><path d="M1.6 0H11.4Q13 0 13 1.6V8L9 12H1.6Q0 12 0 10.4V1.6Q0 0 1.6 0Z" fill="#fff"/><path d="M9 12V9.4Q9 8 10.4 8H13Z" fill="#cfe3f3"/></svg>
<span class="t" style="left:9.0px;top:483.89px;font-size:11px;line-height:14px;color:#333;transform-origin:0 0;transform:scaleX(0.9734);">10:00</span>
<span class="t" style="left:9.0px;top:528.89px;font-size:11px;line-height:14px;color:#333;transform-origin:0 0;transform:scaleX(0.9734);">10:15</span>
<div class="b" style="left:54px;top:523px;width:1845px;height:43px;background:#b3d3f1;"></div>
<div class="b" style="left:1899px;top:523px;width:1px;height:43px;background:#e6e2e2;"></div>
<div class="b" style="left:66px;top:523px;width:87px;height:43px;background:#fdc830;"></div>
<div class="b" style="left:1879px;top:523px;width:20px;height:43px;background:#fdc830;"></div>
<span class="t" style="left:66.4px;top:525.60px;font-size:15px;line-height:20px;transform-origin:0 0;transform:scaleX(0.9946);">Booked</span>
<span class="t" style="left:66.4px;top:544.60px;font-size:15px;line-height:20px;transform-origin:0 0;transform:scaleX(0.9966);">New Patient</span>
<span class="t" style="left:154.2px;top:525.60px;font-size:15px;line-height:20px;transform-origin:0 0;transform:scaleX(0.8862);">GPD186</span>
<svg class="b" style="left:206px;top:526.9px" width="12" height="16" viewBox="0 0 12 16"><path d="M2.3 .7H7.6L11.3 4.4V13.6A1.6 1.6 0 0 1 9.7 15.2H2.3A1.6 1.6 0 0 1 .7 13.6V2.3A1.6 1.6 0 0 1 2.3 .7Z" fill="none" stroke="#0b0b0b" stroke-width="1.4"/><path d="M7 .7V4.9H11.3V4.4L7.6 .7Z" fill="#0b0b0b"/><path d="M3.2 8.5h5.7M3.2 11.7h5.7" stroke="#0b0b0b" stroke-width="1.1"/></svg>
<span class="t" style="left:218.8px;top:525.60px;font-size:15px;line-height:20px;transform-origin:0 0;transform:scaleX(0.9281);">FN00000097</span>
<span class="t" style="left:300.4px;top:525.60px;font-size:15px;line-height:20px;font-weight:700;transform-origin:0 0;transform:scaleX(0.9235);-webkit-text-stroke:.3px #000;">MR SWANEPOEL, J, JOHAN</span>
<span class="t" style="left:300.4px;top:544.70px;font-size:15px;line-height:20px;transform-origin:0 0;transform:scaleX(0.9384);">0703359124 Male Age: 33 years</span>
<span class="t" style="left:563.9px;top:525.60px;font-size:15px;line-height:20px;transform-origin:0 0;transform:scaleX(0.8891);">PRACTITIONER:</span>
<span class="t" style="left:563.9px;top:544.70px;font-size:15px;line-height:20px;transform-origin:0 0;transform:scaleX(0.8628);">DR G GROBELAAR</span>
<span class="t" style="left:826.9px;top:525.60px;font-size:15px;line-height:20px;font-weight:700;transform-origin:0 0;transform:scaleX(0.9240);-webkit-text-stroke:.3px #000;">SWANEPOEL, J, JOHAN</span>
<span class="t" style="left:826.9px;top:544.70px;font-size:15px;line-height:20px;transform-origin:0 0;transform:scaleX(0.8595);">DISCOVERY 00</span>
<div class="b" style="left:1617px;top:531px;width:29px;height:26px;border-radius:13px;background:#1ea65c"></div>
<span class="t" style="top:536.24px;font-size:12px;line-height:16px;font-weight:700;color:#fff;left:1617px;width:29px;text-align:center;">C</span>
<div class="b" style="left:1649px;top:531px;width:29px;height:26px;border-radius:13px;background:#d9334f"></div>
<span class="t" style="top:536.24px;font-size:12px;line-height:16px;font-weight:700;color:#fff;left:1649px;width:29px;text-align:center;">D</span>
<div class="b" style="left:1681px;top:531px;width:29px;height:26px;border-radius:13px;background:#a9a9a9"></div>
<span class="t" style="top:536.24px;font-size:12px;line-height:16px;font-weight:700;color:#fff;left:1681px;width:29px;text-align:center;">S</span>
<div class="b" style="left:1713px;top:531px;width:24px;height:26px;border-radius:13px;background:#a9a9a9"></div>
<span class="t" style="top:536.24px;font-size:12px;line-height:16px;font-weight:700;color:#fff;left:1713px;width:24px;text-align:center;">I</span>
<div class="b" style="left:1741px;top:531px;width:28px;height:26px;border-radius:13px;background:#d94c3d"></div>
<span class="t" style="top:536.24px;font-size:12px;line-height:16px;font-weight:700;color:#fff;left:1741px;width:28px;text-align:center;">A</span>
<div class="b" style="left:1772px;top:531px;width:28px;height:26px;border-radius:13px;background:#d94c3d"></div>
<span class="t" style="top:536.24px;font-size:12px;line-height:16px;font-weight:700;color:#fff;left:1772px;width:28px;text-align:center;">V</span>
<div class="b" style="left:1804px;top:531px;width:34px;height:26px;border-radius:13px;background:#d94c3d"></div>
<svg class="b" style="left:1813px;top:535px" width="15" height="15" viewBox="-7.5 -7.5 15 15"><circle r="7.1" fill="#fff"/><circle cx="-2.1" cy="-1.7" r=".85" fill="#e0624f"/><circle cx="2.1" cy="-1.7" r=".85" fill="#e0624f"/><path d="M-3 3.4Q0 .4 3 3.4" fill="none" stroke="#e47a68" stroke-width=".9" stroke-linecap="round"/></svg>
<div class="b" style="left:1841px;top:531px;width:33px;height:26px;border-radius:13px;background:#428bb8"></div>
<svg class="b" style="left:1851px;top:536.2px" width="14" height="13" viewBox="0 0 14 13"><path d="M1.6 0H11.4Q13 0 13 1.6V8L9 12H1.6Q0 12 0 10.4V1.6Q0 0 1.6 0Z" fill="#fff"/><path d="M9 12V9.4Q9 8 10.4 8H13Z" fill="#cfe3f3"/></svg>
<span class="t" style="left:9.0px;top:573.89px;font-size:11px;line-height:14px;color:#333;transform-origin:0 0;transform:scaleX(0.9734);">10:30</span>
<span class="t" style="left:9.0px;top:618.89px;font-size:11px;line-height:14px;color:#333;transform-origin:0 0;transform:scaleX(0.9734);">10:45</span>
<span class="t" style="left:9.0px;top:663.89px;font-size:11px;line-height:14px;color:#333;transform-origin:0 0;transform:scaleX(1.0030);">11:00</span>
<div class="b" style="left:54px;top:658px;width:1845px;height:88px;background:#ec5bdb;"></div>
<div class="b" style="left:1899px;top:658px;width:1px;height:88px;background:#e6e2e2;"></div>
<div class="b" style="left:54px;top:701px;width:1825px;height:2px;background:#e254d0;"></div>
<div class="b" style="left:66px;top:658px;width:87px;height:88px;background:#e03c44;"></div>
<div class="b" style="left:1879px;top:658px;width:20px;height:88px;background:#e03c44;"></div>
<div class="b" style="left:54px;top:746px;width:1845px;height:1px;background:#e3e3e3;"></div>
<span class="t" style="left:66.4px;top:660.60px;font-size:15px;line-height:20px;color:#fff;transform-origin:0 0;transform:scaleX(0.9807);">Arrived</span>
<span class="t" style="left:66.4px;top:679.60px;font-size:15px;line-height:20px;color:#fff;transform-origin:0 0;transform:scaleX(0.9700);">Emergency</span>
<span class="t" style="left:154.2px;top:660.60px;font-size:15px;line-height:20px;transform-origin:0 0;transform:scaleX(0.8862);">GPD161</span>
<svg class="b" style="left:206px;top:661.9px" width="12" height="16" viewBox="0 0 12 16"><path d="M2.3 .7H7.6L11.3 4.4V13.6A1.6 1.6 0 0 1 9.7 15.2H2.3A1.6 1.6 0 0 1 .7 13.6V2.3A1.6 1.6 0 0 1 2.3 .7Z" fill="none" stroke="#0b0b0b" stroke-width="1.4"/><path d="M7 .7V4.9H11.3V4.4L7.6 .7Z" fill="#0b0b0b"/><path d="M3.2 8.5h5.7M3.2 11.7h5.7" stroke="#0b0b0b" stroke-width="1.1"/></svg>
<span class="t" style="left:218.8px;top:660.60px;font-size:15px;line-height:20px;transform-origin:0 0;transform:scaleX(0.9281);">FN00000072</span>
<span class="t" style="left:300.4px;top:660.60px;font-size:15px;line-height:20px;font-weight:700;transform-origin:0 0;transform:scaleX(0.9226);-webkit-text-stroke:.3px #000;">MS KLEINHANS, M, MADELYN</span>
<span class="t" style="left:300.4px;top:679.70px;font-size:15px;line-height:20px;transform-origin:0 0;transform:scaleX(0.9620);">27828457532 Female Age: 10 months</span>
<span class="t" style="left:563.9px;top:660.60px;font-size:15px;line-height:20px;transform-origin:0 0;transform:scaleX(0.8891);">PRACTITIONER:</span>
<span class="t" style="left:563.9px;top:679.70px;font-size:15px;line-height:20px;transform-origin:0 0;transform:scaleX(0.8628);">DR G GROBELAAR</span>
<span class="t" style="left:826.9px;top:660.60px;font-size:15px;line-height:20px;font-weight:700;transform-origin:0 0;transform:scaleX(0.9272);-webkit-text-stroke:.3px #000;">KLEINHANS, M, MAGGIE</span>
<span class="t" style="left:826.9px;top:679.70px;font-size:15px;line-height:20px;transform-origin:0 0;transform:scaleX(0.8826);">DISCOVERY FLEXICARE 123456789</span>
<div class="b" style="left:1617px;top:666px;width:29px;height:26px;border-radius:13px;background:#a9a9a9"></div>
<span class="t" style="top:671.24px;font-size:12px;line-height:16px;font-weight:700;color:#fff;left:1617px;width:29px;text-align:center;">C</span>
<div class="b" style="left:1649px;top:666px;width:29px;height:26px;border-radius:13px;background:#d9334f"></div>
<span class="t" style="top:671.24px;font-size:12px;line-height:16px;font-weight:700;color:#fff;left:1649px;width:29px;text-align:center;">D</span>
<div class="b" style="left:1681px;top:666px;width:29px;height:26px;border-radius:13px;background:#a9a9a9"></div>
<span class="t" style="top:671.24px;font-size:12px;line-height:16px;font-weight:700;color:#fff;left:1681px;width:29px;text-align:center;">S</span>
<div class="b" style="left:1713px;top:666px;width:24px;height:26px;border-radius:13px;background:#a9a9a9"></div>
<span class="t" style="top:671.24px;font-size:12px;line-height:16px;font-weight:700;color:#fff;left:1713px;width:24px;text-align:center;">I</span>
<div class="b" style="left:1741px;top:666px;width:28px;height:26px;border-radius:13px;background:#d94c3d"></div>
<span class="t" style="top:671.24px;font-size:12px;line-height:16px;font-weight:700;color:#fff;left:1741px;width:28px;text-align:center;">A</span>
<div class="b" style="left:1772px;top:666px;width:28px;height:26px;border-radius:13px;background:#fd7e22"></div>
<span class="t" style="top:671.24px;font-size:12px;line-height:16px;font-weight:700;color:#fff;left:1772px;width:28px;text-align:center;">V</span>
<div class="b" style="left:1804px;top:666px;width:34px;height:26px;border-radius:13px;background:#d94c3d"></div>
<svg class="b" style="left:1813px;top:670px" width="15" height="15" viewBox="-7.5 -7.5 15 15"><circle r="7.1" fill="#fff"/><circle cx="-2.1" cy="-1.7" r=".85" fill="#e0624f"/><circle cx="2.1" cy="-1.7" r=".85" fill="#e0624f"/><path d="M-3 3.4Q0 .4 3 3.4" fill="none" stroke="#e47a68" stroke-width=".9" stroke-linecap="round"/></svg>
<div class="b" style="left:1841px;top:666px;width:33px;height:26px;border-radius:13px;background:#428bb8"></div>
<svg class="b" style="left:1851px;top:671.2px" width="14" height="13" viewBox="0 0 14 13"><path d="M1.6 0H11.4Q13 0 13 1.6V8L9 12H1.6Q0 12 0 10.4V1.6Q0 0 1.6 0Z" fill="#fff"/><path d="M9 12V9.4Q9 8 10.4 8H13Z" fill="#cfe3f3"/></svg>
<span class="t" style="left:9.0px;top:708.89px;font-size:11px;line-height:14px;color:#333;transform-origin:0 0;transform:scaleX(1.0030);">11:15</span>
<span class="t" style="left:9.0px;top:753.89px;font-size:11px;line-height:14px;color:#333;transform-origin:0 0;transform:scaleX(1.0030);">11:30</span>
<span class="t" style="left:9.0px;top:798.89px;font-size:11px;line-height:14px;color:#333;transform-origin:0 0;transform:scaleX(1.0030);">11:45</span>
<div class="b" style="left:54px;top:793px;width:1845px;height:43px;background:#b3d3f1;"></div>
<div class="b" style="left:1899px;top:793px;width:1px;height:43px;background:#e6e2e2;"></div>
<div class="b" style="left:66px;top:793px;width:87px;height:43px;background:#309c8b;"></div>
<div class="b" style="left:1879px;top:793px;width:20px;height:43px;background:#309c8b;"></div>
<span class="t" style="left:66.4px;top:795.60px;font-size:15px;line-height:20px;transform-origin:0 0;transform:scaleX(0.9946);">Booked</span>
<span class="t" style="left:66.4px;top:814.60px;font-size:15px;line-height:20px;">Follow Up</span>
<span class="t" style="left:154.2px;top:795.60px;font-size:15px;line-height:20px;transform-origin:0 0;transform:scaleX(0.8862);">GPD177</span>
<svg class="b" style="left:206px;top:796.9px" width="12" height="16" viewBox="0 0 12 16"><path d="M2.3 .7H7.6L11.3 4.4V13.6A1.6 1.6 0 0 1 9.7 15.2H2.3A1.6 1.6 0 0 1 .7 13.6V2.3A1.6 1.6 0 0 1 2.3 .7Z" fill="none" stroke="#0b0b0b" stroke-width="1.4"/><path d="M7 .7V4.9H11.3V4.4L7.6 .7Z" fill="#0b0b0b"/><path d="M3.2 8.5h5.7M3.2 11.7h5.7" stroke="#0b0b0b" stroke-width="1.1"/></svg>
<span class="t" style="left:218.8px;top:795.60px;font-size:15px;line-height:20px;transform-origin:0 0;transform:scaleX(0.9281);">FN00000088</span>
<span class="t" style="left:300.4px;top:795.60px;font-size:15px;line-height:20px;font-weight:700;transform-origin:0 0;transform:scaleX(0.9259);-webkit-text-stroke:.3px #000;">MR SHNOGLO, T, THEMBELANI</span>
<span class="t" style="left:300.4px;top:814.70px;font-size:15px;line-height:20px;transform-origin:0 0;transform:scaleX(0.9401);">27725487889 Male Age: 36 years</span>
<span class="t" style="left:563.9px;top:795.60px;font-size:15px;line-height:20px;transform-origin:0 0;transform:scaleX(0.8891);">PRACTITIONER:</span>
<span class="t" style="left:563.9px;top:814.70px;font-size:15px;line-height:20px;transform-origin:0 0;transform:scaleX(0.8628);">DR G GROBELAAR</span>
<span class="t" style="left:826.9px;top:795.60px;font-size:15px;line-height:20px;font-weight:700;transform-origin:0 0;transform:scaleX(0.9292);-webkit-text-stroke:.3px #000;">SHNOGLO, T, THEMBELANI</span>
<span class="t" style="left:826.9px;top:814.70px;font-size:15px;line-height:20px;transform-origin:0 0;transform:scaleX(0.9197);">PRIVATE PATIENT 25874613844</span>
<div class="b" style="left:1617px;top:801px;width:29px;height:26px;border-radius:13px;background:#a9a9a9"></div>
<span class="t" style="top:806.24px;font-size:12px;line-height:16px;font-weight:700;color:#fff;left:1617px;width:29px;text-align:center;">C</span>
<div class="b" style="left:1649px;top:801px;width:29px;height:26px;border-radius:13px;background:#d9334f"></div>
<span class="t" style="top:806.24px;font-size:12px;line-height:16px;font-weight:700;color:#fff;left:1649px;width:29px;text-align:center;">D</span>
<div class="b" style="left:1681px;top:801px;width:29px;height:26px;border-radius:13px;background:#a9a9a9"></div>
<span class="t" style="top:806.24px;font-size:12px;line-height:16px;font-weight:700;color:#fff;left:1681px;width:29px;text-align:center;">S</span>
<div class="b" style="left:1713px;top:801px;width:24px;height:26px;border-radius:13px;background:#a9a9a9"></div>
<span class="t" style="top:806.24px;font-size:12px;line-height:16px;font-weight:700;color:#fff;left:1713px;width:24px;text-align:center;">I</span>
<div class="b" style="left:1741px;top:801px;width:28px;height:26px;border-radius:13px;background:#d94c3d"></div>
<span class="t" style="top:806.24px;font-size:12px;line-height:16px;font-weight:700;color:#fff;left:1741px;width:28px;text-align:center;">A</span>
<div class="b" style="left:1772px;top:801px;width:28px;height:26px;border-radius:13px;background:#d94c3d"></div>
<span class="t" style="top:806.24px;font-size:12px;line-height:16px;font-weight:700;color:#fff;left:1772px;width:28px;text-align:center;">V</span>
<div class="b" style="left:1804px;top:801px;width:34px;height:26px;border-radius:13px;background:#d94c3d"></div>
<svg class="b" style="left:1813px;top:805px" width="15" height="15" viewBox="-7.5 -7.5 15 15"><circle r="7.1" fill="#fff"/><circle cx="-2.1" cy="-1.7" r=".85" fill="#e0624f"/><circle cx="2.1" cy="-1.7" r=".85" fill="#e0624f"/><path d="M-3 3.4Q0 .4 3 3.4" fill="none" stroke="#e47a68" stroke-width=".9" stroke-linecap="round"/></svg>
<div class="b" style="left:1841px;top:801px;width:33px;height:26px;border-radius:13px;background:#428bb8"></div>
<svg class="b" style="left:1851px;top:806.2px" width="14" height="13" viewBox="0 0 14 13"><path d="M1.6 0H11.4Q13 0 13 1.6V8L9 12H1.6Q0 12 0 10.4V1.6Q0 0 1.6 0Z" fill="#fff"/><path d="M9 12V9.4Q9 8 10.4 8H13Z" fill="#cfe3f3"/></svg>
<span class="t" style="left:9.0px;top:843.89px;font-size:11px;line-height:14px;color:#333;transform-origin:0 0;transform:scaleX(0.9734);">12:00</span>
<div class="b" style="left:54px;top:838px;width:1845px;height:43px;background:#a9c8e8;"></div>
<div class="b" style="left:1899px;top:838px;width:1px;height:43px;background:#e6e2e2;"></div>
<div class="b" style="left:66px;top:838px;width:87px;height:43px;background:#2882c8;"></div>
<div class="b" style="left:1879px;top:838px;width:20px;height:43px;background:#2882c8;"></div>
<span class="t" style="left:66.4px;top:840.60px;font-size:15px;line-height:20px;transform-origin:0 0;transform:scaleX(0.9946);">Booked</span>
<span class="t" style="left:66.4px;top:859.60px;font-size:15px;line-height:20px;transform-origin:0 0;transform:scaleX(1.0145);">Consultation</span>
<span class="t" style="left:154.2px;top:840.60px;font-size:15px;line-height:20px;transform-origin:0 0;transform:scaleX(0.8862);">GPD163</span>
<svg class="b" style="left:206px;top:841.9px" width="12" height="16" viewBox="0 0 12 16"><path d="M2.3 .7H7.6L11.3 4.4V13.6A1.6 1.6 0 0 1 9.7 15.2H2.3A1.6 1.6 0 0 1 .7 13.6V2.3A1.6 1.6 0 0 1 2.3 .7Z" fill="none" stroke="#0b0b0b" stroke-width="1.4"/><path d="M7 .7V4.9H11.3V4.4L7.6 .7Z" fill="#0b0b0b"/><path d="M3.2 8.5h5.7M3.2 11.7h5.7" stroke="#0b0b0b" stroke-width="1.1"/></svg>
<span class="t" style="left:218.8px;top:840.60px;font-size:15px;line-height:20px;transform-origin:0 0;transform:scaleX(0.9281);">FN00000074</span>
<span class="t" style="left:300.4px;top:840.60px;font-size:15px;line-height:20px;font-weight:700;transform-origin:0 0;transform:scaleX(0.9178);-webkit-text-stroke:.3px #000;">MR SHAN, K, KANKU</span>
<span class="t" style="left:300.4px;top:859.70px;font-size:15px;line-height:20px;transform-origin:0 0;transform:scaleX(0.9403);">278155477551 Male Age: 31 years</span>
<span class="t" style="left:563.9px;top:840.60px;font-size:15px;line-height:20px;transform-origin:0 0;transform:scaleX(0.8891);">PRACTITIONER:</span>
<span class="t" style="left:563.9px;top:859.70px;font-size:15px;line-height:20px;transform-origin:0 0;transform:scaleX(0.8628);">DR G GROBELAAR</span>
<span class="t" style="left:826.9px;top:840.60px;font-size:15px;line-height:20px;font-weight:700;transform-origin:0 0;transform:scaleX(0.9197);-webkit-text-stroke:.3px #000;">SHAN, K, KANKU</span>
<span class="t" style="left:826.9px;top:859.70px;font-size:15px;line-height:20px;transform-origin:0 0;transform:scaleX(0.9186);">PRIVATE PATIENT 1233446677</span>
<div class="b" style="left:1617px;top:846px;width:29px;height:26px;border-radius:13px;background:#a9a9a9"></div>
<span class="t" style="top:851.24px;font-size:12px;line-height:16px;font-weight:700;color:#fff;left:1617px;width:29px;text-align:center;">C</span>
<div class="b" style="left:1649px;top:846px;width:29px;height:26px;border-radius:13px;background:#d9334f"></div>
<span class="t" style="top:851.24px;font-size:12px;line-height:16px;font-weight:700;color:#fff;left:1649px;width:29px;text-align:center;">D</span>
<div class="b" style="left:1681px;top:846px;width:29px;height:26px;border-radius:13px;background:#a9a9a9"></div>
<span class="t" style="top:851.24px;font-size:12px;line-height:16px;font-weight:700;color:#fff;left:1681px;width:29px;text-align:center;">S</span>
<div class="b" style="left:1713px;top:846px;width:24px;height:26px;border-radius:13px;background:#a9a9a9"></div>
<span class="t" style="top:851.24px;font-size:12px;line-height:16px;font-weight:700;color:#fff;left:1713px;width:24px;text-align:center;">I</span>
<div class="b" style="left:1741px;top:846px;width:28px;height:26px;border-radius:13px;background:#d94c3d"></div>
<span class="t" style="top:851.24px;font-size:12px;line-height:16px;font-weight:700;color:#fff;left:1741px;width:28px;text-align:center;">A</span>
<div class="b" style="left:1772px;top:846px;width:28px;height:26px;border-radius:13px;background:#d94c3d"></div>
<span class="t" style="top:851.24px;font-size:12px;line-height:16px;font-weight:700;color:#fff;left:1772px;width:28px;text-align:center;">V</span>
<div class="b" style="left:1804px;top:846px;width:34px;height:26px;border-radius:13px;background:#d94c3d"></div>
<svg class="b" style="left:1813px;top:850px" width="15" height="15" viewBox="-7.5 -7.5 15 15"><circle r="7.1" fill="#fff"/><circle cx="-2.1" cy="-1.7" r=".85" fill="#e0624f"/><circle cx="2.1" cy="-1.7" r=".85" fill="#e0624f"/><path d="M-3 3.4Q0 .4 3 3.4" fill="none" stroke="#e47a68" stroke-width=".9" stroke-linecap="round"/></svg>
<div class="b" style="left:1841px;top:846px;width:33px;height:26px;border-radius:13px;background:#428bb8"></div>
<svg class="b" style="left:1851px;top:851.2px" width="14" height="13" viewBox="0 0 14 13"><path d="M1.6 0H11.4Q13 0 13 1.6V8L9 12H1.6Q0 12 0 10.4V1.6Q0 0 1.6 0Z" fill="#fff"/><path d="M9 12V9.4Q9 8 10.4 8H13Z" fill="#cfe3f3"/></svg>
<span class="t" style="left:9.0px;top:888.89px;font-size:11px;line-height:14px;color:#333;transform-origin:0 0;transform:scaleX(0.9734);">12:15</span>
<div class="b" style="left:1904px;top:107px;width:15px;height:792px;background:#fafafa;"></div>
<svg class="b" style="left:1907px;top:111px" width="9" height="7" viewBox="0 0 9 7"><path d="M4.5 .3L8.8 6.2Q9 6.8 8.3 6.8H.7Q0 6.8 .2 6.2Z" fill="#8b8b8b"/></svg>
<div class="b" style="left:1907px;top:124px;width:9px;height:422px;background:#8b8b8b;border-radius:4.5px;"></div>
</body></html>
